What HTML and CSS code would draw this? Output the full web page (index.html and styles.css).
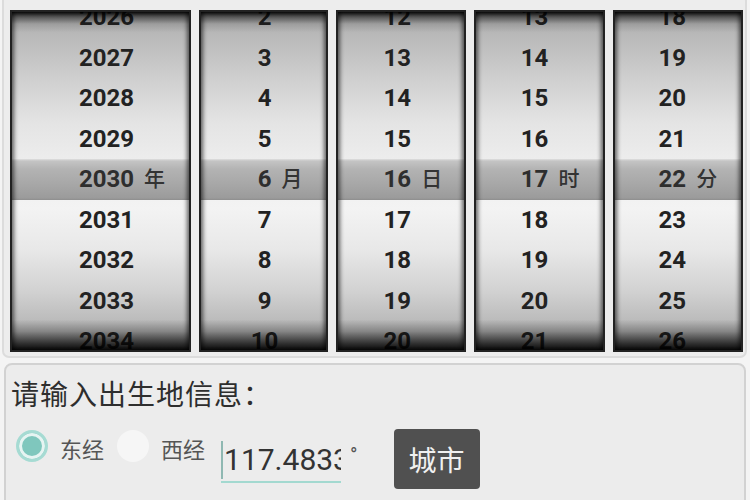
FILE: index.html
```html
<!DOCTYPE html>
<html lang="zh-CN">
<head>
<meta charset="utf-8">
<title>出生时间</title>
<link rel="stylesheet" href="styles.css">
</head>
<body>
<div class="picker">
  <div class="wheel w-year">
    <div class="list">
      <div class="item">2026</div>
      <div class="item">2027</div>
      <div class="item">2028</div>
      <div class="item">2029</div>
      <div class="item sel">2030<span class="unit">年</span></div>
      <div class="item">2031</div>
      <div class="item">2032</div>
      <div class="item">2033</div>
      <div class="item">2034</div>
    </div>
  </div>
  <div class="wheel w-month">
    <div class="list">
      <div class="item">2</div>
      <div class="item">3</div>
      <div class="item">4</div>
      <div class="item">5</div>
      <div class="item sel">6<span class="unit">月</span></div>
      <div class="item">7</div>
      <div class="item">8</div>
      <div class="item">9</div>
      <div class="item">10</div>
    </div>
  </div>
  <div class="wheel w-day">
    <div class="list">
      <div class="item">12</div>
      <div class="item">13</div>
      <div class="item">14</div>
      <div class="item">15</div>
      <div class="item sel">16<span class="unit">日</span></div>
      <div class="item">17</div>
      <div class="item">18</div>
      <div class="item">19</div>
      <div class="item">20</div>
    </div>
  </div>
  <div class="wheel w-hour">
    <div class="list">
      <div class="item">13</div>
      <div class="item">14</div>
      <div class="item">15</div>
      <div class="item">16</div>
      <div class="item sel">17<span class="unit">时</span></div>
      <div class="item">18</div>
      <div class="item">19</div>
      <div class="item">20</div>
      <div class="item">21</div>
    </div>
  </div>
  <div class="wheel w-min">
    <div class="list">
      <div class="item">18</div>
      <div class="item">19</div>
      <div class="item">20</div>
      <div class="item">21</div>
      <div class="item sel">22<span class="unit">分</span></div>
      <div class="item">23</div>
      <div class="item">24</div>
      <div class="item">25</div>
      <div class="item">26</div>
    </div>
  </div>
</div>

<div class="place">
  <div class="title">请输入出生地信息：</div>
  <div class="row">
    <span class="radio on"></span>
    <span class="rlabel">东经</span>
    <span class="radio"></span>
    <span class="rlabel">西经</span>
    <div class="field"><span class="caret"></span>117.4833</div>
    <span class="deg">°</span>
    <div class="btn">城市</div>
  </div>
</div>
</body>
</html>
```

FILE: styles.css
```css
* { box-sizing: border-box; }

html, body {
  margin: 0;
  padding: 0;
  width: 750px;
  height: 500px;
  overflow: hidden;
  background: #f4f4f4;
  font-family: Roboto, "Noto Sans CJK SC", sans-serif;
}

.picker {
  display: flex;
  gap: 8px;
  margin: -6px 3px 0 2px;
  padding: 14px 2px 5px 6px;
  background: #ededed;
  border: 2px solid #dcdcdc;
  border-radius: 7px;
  height: 364px;
}

.wheel {
  position: relative;
  height: 342px;
  overflow: hidden;
  background: linear-gradient(#a9a9a9 0%, #bababa 8%, #cfcfcf 20%, #e4e4e4 33%, #ededed 44%, #f3f3f3 58%, #e8e8e8 70%, #d2d2d2 82%, #b8b8b8 92%, #a0a0a0 100%);
}
.wheel::after {
  content: "";
  position: absolute;
  inset: 0;
  pointer-events: none;
  border: 2px solid #222;
  background: linear-gradient(rgba(0,0,0,0.92) 0, rgba(0,0,0,0.5) 1.5%, rgba(0,0,0,0.12) 3.5%, rgba(0,0,0,0) 6%, rgba(0,0,0,0) 91%, rgba(0,0,0,0.25) 94.5%, rgba(0,0,0,0.7) 98%, rgba(0,0,0,0.95) 100%);
  box-shadow: inset 4px 0 4px -2px rgba(0,0,0,0.6), inset -4px 0 4px -2px rgba(0,0,0,0.6);
}

.w-year { width: 182px; }
.w-month { width: 130px; }
.w-day, .w-hour, .w-min { width: 131px; }

.list { margin-top: -13px; }

.item {
  height: 40.5px;
  line-height: 40.5px;
  text-align: center;
  font-size: 24px;
  font-weight: 700;
  color: #222;
}
.w-year .item { padding-left: 12px; }
.w-month .item { padding-left: 2px; }
.w-day .item { padding-right: 8px; }
.w-hour .item { padding-right: 10px; }
.w-min .item { padding-right: 11px; }

.item.sel {
  color: #2e2e2e;
  background: linear-gradient(#e0e0e0 0, #c4c4c4 5%, #b3b3b3 25%, #a6a6a6 65%, #9b9b9b 95%, #8e8e8e 100%);
}
.unit {
  display: inline-block;
  width: 0;
  text-indent: 10px;
  white-space: nowrap;
  font-size: 21px;
  font-weight: 500;
  vertical-align: top;
  color: #333;
}

.place {
  margin: 5px 4px 0 4px;
  height: 160px;
  background: #ececec;
  border: 2px solid #d2d2d2;
  border-radius: 8px;
  padding: 8px 0 0 5px;
}

.title {
  font-family: "Noto Sans CJK SC", sans-serif;
  font-size: 28px;
  line-height: 40px;
  letter-spacing: 1px;
  color: #2e2e2e;
}

.row {
  display: flex;
  align-items: flex-start;
  margin-top: 16px;
}

.radio {
  width: 32px;
  height: 32px;
  margin: 1px 0 0 5px;
  border-radius: 50%;
  background: #f6f6f6;
  flex: none;
}
.radio.on {
  background: #7fc7bd;
  border: 3px solid #a6dbd3;
  box-shadow: inset 0 0 0 3px #e6f4f2;
}
.radio + .rlabel { margin-left: 12px; }
.rlabel + .radio { margin-left: 13px; }

.rlabel {
  font-family: "Noto Sans CJK SC", sans-serif;
  font-size: 22px;
  line-height: 30px;
  margin-top: 4px;
  color: #555;
}

.field {
  margin-left: 16px;
  margin-top: 4px;
  width: 120px;
  height: 50px;
  line-height: 54px;
  font-size: 30px;
  color: #333;
  white-space: nowrap;
  overflow: hidden;
  border-bottom: 2px solid #a3d9d0;
}
.caret {
  display: inline-block;
  width: 2px;
  height: 38px;
  margin-right: 1px;
  vertical-align: -9px;
  background: #8fb8b2;
}

.deg {
  margin: 16px 0 0 9px;
  font-size: 20px;
  line-height: 20px;
  color: #555;
}

.btn {
  margin-left: 36px;
  width: 86px;
  height: 60px;
  line-height: 60px;
  text-align: center;
  background: #505050;
  border-radius: 4px;
  color: #f0f0f0;
  font-family: "Noto Sans CJK SC", sans-serif;
  font-size: 28px;
}
```
